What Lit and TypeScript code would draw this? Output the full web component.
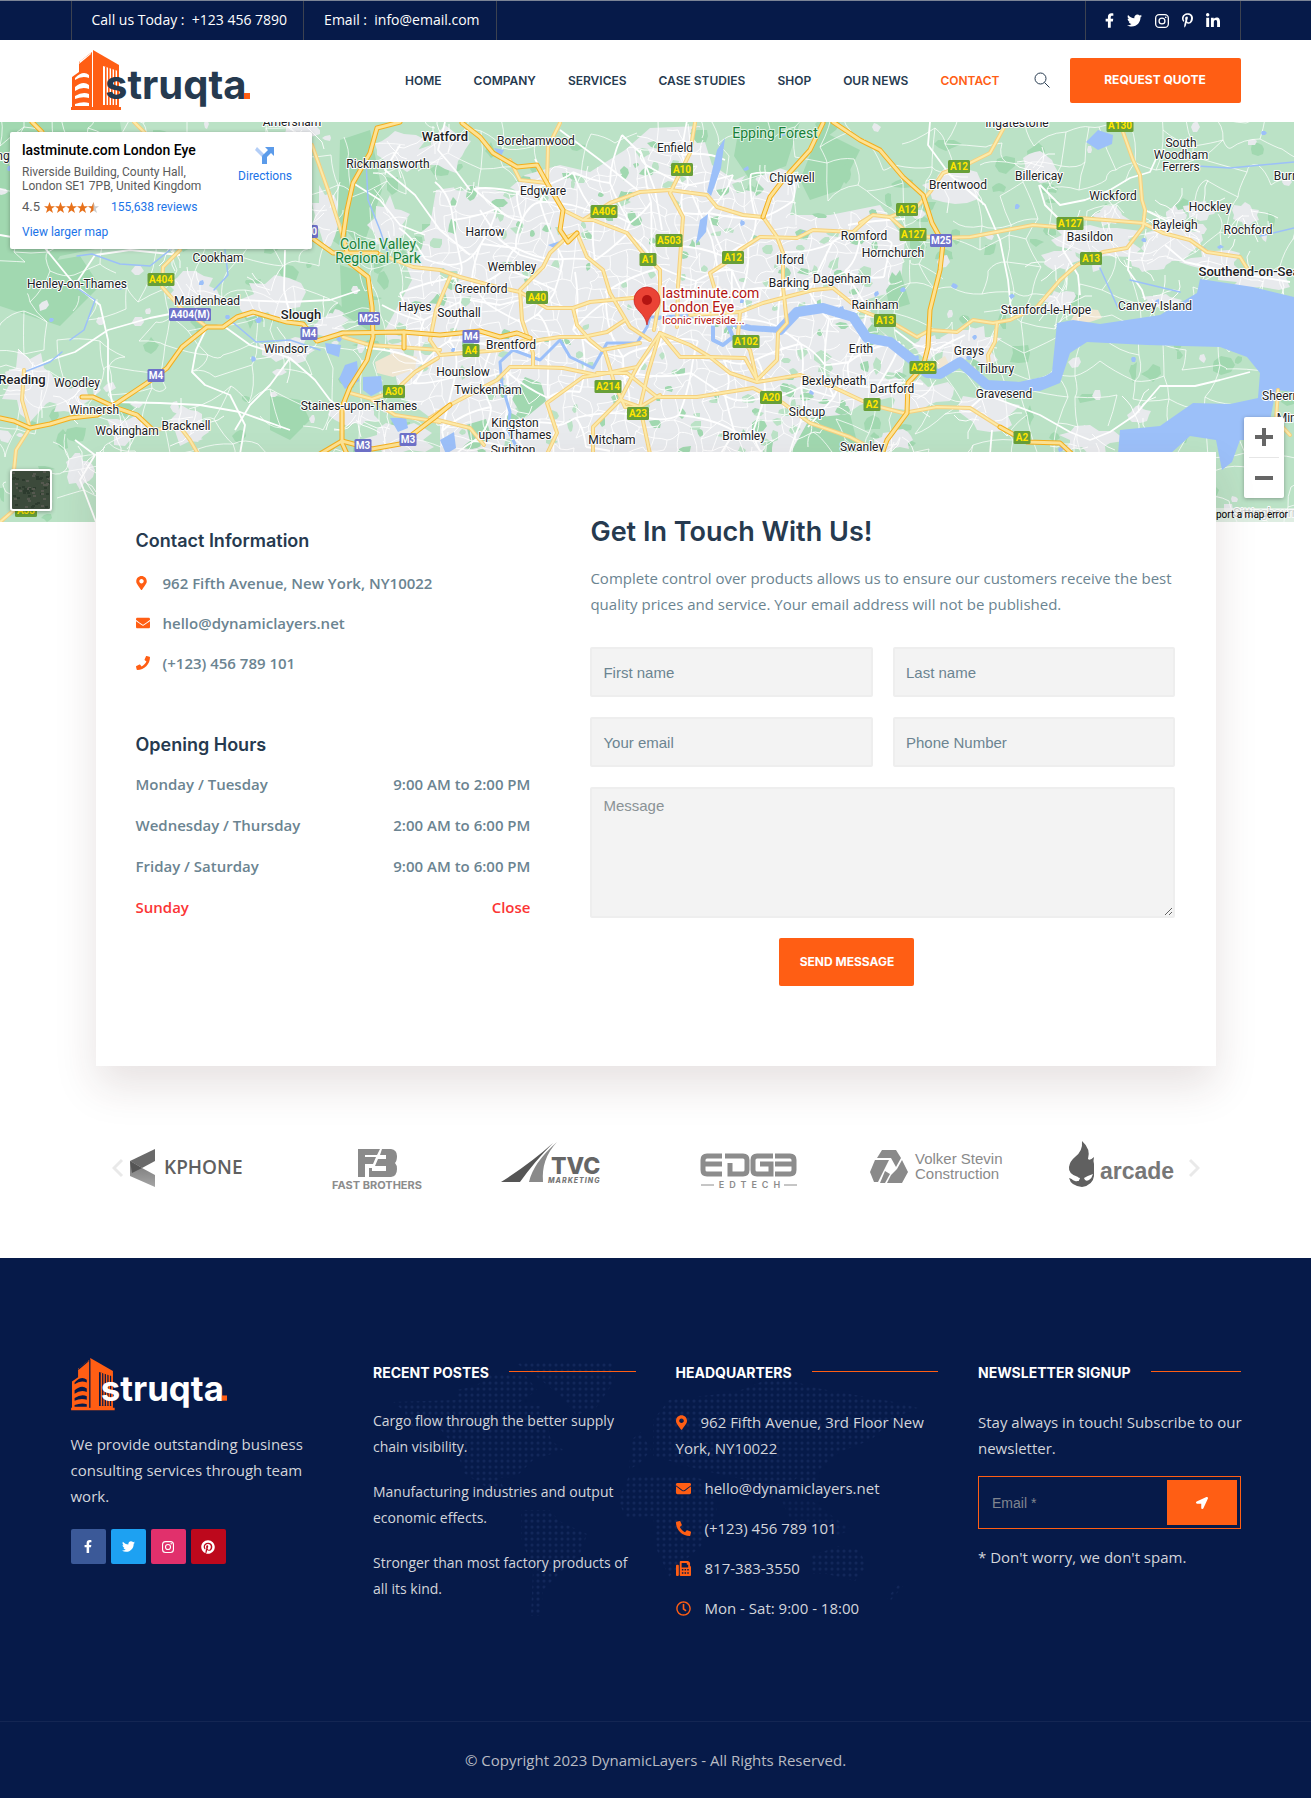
import { LitElement, html, svg, css } from "lit";
import { customElement, property } from "lit/decorators.js";

/* ---------- icon data ---------- */
const ICONS: Record<string, [number, number, string]> = {
  facebook: [320, 512, "M279.14 288l14.22-92.66h-88.91v-60.13c0-25.35 12.42-50.06 52.24-50.06h40.42V6.26S260.43 0 225.36 0c-73.22 0-121.08 44.38-121.08 124.72v70.62H22.89V288h81.39v224h100.17V288z"],
  twitter: [512, 512, "M459.37 151.716c.325 4.548.325 9.097.325 13.645 0 138.72-105.583 298.558-298.558 298.558-59.452 0-114.68-17.219-161.137-47.106 8.447.974 16.568 1.299 25.34 1.299 49.055 0 94.213-16.568 130.274-44.832-46.132-.975-84.792-31.188-98.112-72.772 6.498.974 12.995 1.624 19.818 1.624 9.421 0 18.843-1.3 27.614-3.573-48.081-9.747-84.143-51.98-84.143-102.985v-1.299c13.969 7.797 30.214 12.67 47.431 13.319-28.264-18.843-46.781-51.005-46.781-87.391 0-19.492 5.197-37.36 14.294-52.954 51.655 63.675 129.3 105.258 216.365 109.807-1.624-7.797-2.599-15.918-2.599-24.04 0-57.828 46.782-104.934 104.934-104.934 30.213 0 57.502 12.67 76.67 33.137 23.715-4.548 46.456-13.32 66.599-25.34-7.798 24.366-24.366 44.833-46.132 57.827 21.117-2.273 41.584-8.122 60.426-16.243-14.292 20.791-32.161 39.308-52.628 54.253z"],
  pinterestP: [384, 512, "M204 6.5C101.4 6.5 0 74.9 0 185.6 0 256 39.6 296 63.6 296c9.9 0 15.6-27.6 15.6-35.4 0-9.3-23.7-29.1-23.7-67.8 0-80.4 61.2-137.4 140.4-137.4 68.1 0 118.5 38.7 118.5 109.8 0 53.1-21.3 152.7-90.3 152.7-24.9 0-46.2-18-46.2-43.8 0-37.8 26.4-74.4 26.4-113.4 0-66.2-93.9-54.2-93.9 25.8 0 16.8 2.1 35.4 9.6 50.7-13.8 59.4-42 147.9-42 209.1 0 18.9 2.7 37.5 4.5 56.4 3.4 3.8 1.7 3.4 6.9 1.5 50.4-69 48.6-82.5 71.4-172.8 12.3 23.4 44.1 36 69.3 36 106.2 0 153.9-103.5 153.9-196.8C384 71.3 298.2 6.5 204 6.5z"],
  pinterest: [496, 512, "M496 256c0 137-111 248-248 248-25.6 0-50.2-3.9-73.4-11.1 10.1-16.5 25.2-43.5 30.8-65 3-11.6 15.4-59 15.4-59 8.1 15.4 31.7 28.5 56.8 28.5 74.8 0 128.7-68.8 128.7-154.3 0-81.9-66.9-143.2-152.9-143.2-107 0-163.9 71.8-163.9 150.1 0 36.4 19.4 81.7 50.3 96.1 4.7 2.2 7.2 1.2 8.3-3.3.8-3.4 5-20.3 6.9-28.1.6-2.5.3-4.7-1.7-7.1-10.1-12.5-18.3-35.3-18.3-56.6 0-54.7 41.4-107.6 112-107.6 60.9 0 103.6 41.5 103.6 100.9 0 67.1-33.9 113.6-78 113.6-24.3 0-42.6-20.1-36.7-44.8 7-29.5 20.5-61.3 20.5-82.6 0-19-10.2-34.9-31.4-34.9-24.9 0-44.9 25.7-44.9 60.2 0 22 7.4 36.8 7.4 36.8s-24.5 103.8-29 123.2c-5 21.4-3 51.6-.9 71.2C65.4 450.9 0 361.1 0 256 0 119 111 8 248 8s248 111 248 248z"],
  linkedin: [448, 512, "M100.28 448H7.4V148.9h92.88zM53.79 108.1C24.09 108.1 0 83.5 0 53.8a53.79 53.79 0 0 1 107.58 0c0 29.7-24.1 54.3-53.79 54.3zM447.9 448h-92.68V302.4c0-34.7-.7-79.2-48.29-79.2-48.29 0-55.69 37.7-55.69 76.7V448h-92.78V148.9h89.08v40.8h1.3c12.4-23.5 42.69-48.3 87.88-48.3 94 0 111.28 61.9 111.28 142.3V448z"],
  instagram: [448, 512, "M132 32h184a132 132 0 0 1 132 132v184a132 132 0 0 1-132 132H132A132 132 0 0 1 0 348V164A132 132 0 0 1 132 32zm0 42a90 90 0 0 0-90 90v184a90 90 0 0 0 90 90h184a90 90 0 0 0 90-90V164a90 90 0 0 0-90-90zM224 141a115 115 0 1 1 0 230 115 115 0 0 1 0-230zm0 41a74 74 0 1 0 0 148 74 74 0 0 0 0-148zM344 109a27 27 0 1 1 0 54 27 27 0 0 1 0-54z"],
  marker: [384, 512, "M172.268 501.67C26.97 291.031 0 269.413 0 192 0 85.961 85.961 0 192 0s192 85.961 192 192c0 77.413-26.97 99.031-172.268 309.67-9.535 13.774-29.93 13.773-39.464 0zM192 272c44.183 0 80-35.817 80-80s-35.817-80-80-80-80 35.817-80 80 35.817 80 80 80z"],
  envelope: [512, 512, "M502.3 190.8c3.9-3.1 9.7-.2 9.7 4.7V400c0 26.5-21.5 48-48 48H48c-26.5 0-48-21.5-48-48V195.6c0-5 5.7-7.8 9.7-4.7 22.4 17.4 52.1 39.5 154.1 113.6 21.1 15.4 56.7 47.8 92.2 47.6 35.7.3 72-32.8 92.3-47.6 102-74.1 131.6-96.3 154-113.7zM256 320c23.2.4 56.6-29.2 73.4-41.4 132.7-96.3 142.8-104.7 173.4-128.7 5.8-4.5 9.2-11.5 9.2-18.9v-19c0-26.5-21.5-48-48-48H48c-26.5 0-48 21.5-48 48v19c0 7.4 3.4 14.3 9.2 18.9 30.6 23.9 40.7 32.4 173.4 128.7 16.8 12.2 50.2 41.8 73.4 41.4z"],
  phone: [512, 512, "M493.4 24.6l-104-24c-11.3-2.6-22.9 3.3-27.5 13.9l-48 112c-4.2 9.8-1.4 21.3 6.9 28l60.6 49.6c-36 76.7-98.9 140.5-177.2 177.2l-49.6-60.6c-6.8-8.3-18.2-11.1-28-6.9l-112 48C3.9 366.5-2 378.1.6 389.4l24 104C27.1 504.2 36.7 512 48 512c256.1 0 464-207.5 464-464 0-11.2-7.7-20.9-18.6-23.4z"],
  fax: [512, 512, "M64 128H32a32 32 0 0 0-32 32v320a32 32 0 0 0 32 32h32a32 32 0 0 0 32-32V160a32 32 0 0 0-32-32zM480 162V77a32 32 0 0 0-9-23L426 9a32 32 0 0 0-23-9H160a32 32 0 0 0-32 32v448a32 32 0 0 0 32 32h320a32 32 0 0 0 32-32V224c0-30-12-55-32-62zM192 64h176v48a16 16 0 0 0 16 16h32v96H192zM200 272h52v52h-52zm92 0h52v52h-52zm92 0h52v52h-52zM200 384h52v52h-52zm92 0h52v52h-52zm92 0h52v52h-52z"],
  clock: [512, 512, "M256 8C119 8 8 119 8 256s111 248 248 248 248-111 248-248S393 8 256 8zm0 448c-110.500 0-200-89.500-200-200S145.500 56 256 56s200 89.500 200 200-89.500 200-200 200zM317.800 351.900l-84.900-61.700c-3.100-2.300-4.900-5.900-4.900-9.700V116c0-6.600 5.400-12 12-12h32c6.600 0 12 5.400 12 12v141.700l66.800 48.600c5.400 3.900 6.500 11.400 2.600 16.800L334.600 349c-3.900 5.300-11.400 6.500-16.800 2.900z"],
  arrow: [512, 512, "M444.52 3.52L28.74 195.42c-47.97 22.39-31.98 92.75 19.19 92.75h175.91v175.91c0 51.17 70.36 67.17 92.75 19.19l191.9-415.78c15.99-38.38-25.59-79.97-63.97-63.97z"],
};

function icon(name: string, size: number, flip = false) {
  const [w, h, d] = ICONS[name];
  return html`<svg class="icon" width=${Math.round((size * w) / h)} height=${size} viewBox="0 0 ${w} ${h}" aria-hidden="true">
    <path d=${d} fill="currentColor" fill-rule="evenodd" transform=${flip ? "translate(" + w + ",0) scale(-1,1)" : ""}></path>
  </svg>`;
}

/* ---------- brand mark ---------- */
@customElement("brand-logo")
export class BrandLogo extends LitElement {
  @property({ type: Boolean }) light = false;
  @property({ type: Number }) width = 180;
  static styles = css`
    :host { display: block; }
    svg { display: block; }
    .word { font-family: Inter, "Liberation Sans", sans-serif; font-weight: 700; font-size: 40px; }
  `;
  render() {
    const ink = this.light ? "#fff" : "#263a4f";
    const gap = this.light ? "#061a49" : "#fff";
    return html`<svg width=${this.width} height=${Math.round((this.width * 62) / 180)} viewBox="0 0 180 62" role="img" aria-label="struqta">
      <g fill="#ff5e14">
        <path d="M8 12 21 2v56H1V27l7-5z"></path>
        <path d="M22 0 48 15v43H22z"></path>
        <path d="M0 57h50v3H0z"></path>
      </g>
      <g fill=${gap}>
        <path d="M8 14 20 4v-1L9 11zM21 2h1v55h-1zM32 16l15 5v34H32z"></path>
        <path d="M4 28q8-8 14-3v3q-7-3-14 2zM4 37q8-7 14-2v4q-7-3-14 2zM4 46q8-5 14-2v4q-7-2-14 1zM4 54q8-3 14-1v3H4z"></path>
      </g>
      <g fill="#ff5e14">
        ${[34, 37, 40, 43, 46].map((x) => svg`<rect x=${x} y="17" width="1.600" height="38"></rect>`)}
      </g>
      <text class="word" x="34" y="49" fill=${ink}>struqta</text>
      <rect x="173" y="43" width="6" height="6" fill="#ff5e14"></rect>
    </svg>`;
  }
}

/* ---------- street map ---------- */
type P = [number, number];
const MOTORWAYS = [
  "400,122 377,128 370,153 353,183 347,210 343,237 350,263 368,277 372,307 373,337 367,360 350,387 342,407 342,443 347,454",
  "0,418 14,421 30,428 50,424 70,418 97,415 117,403 147,383 167,368 182,347 207,327 223,327 237,317 253,312 287,322 303,324 317,341 343,333 403,332 440,335 480,331 500,337 517,333 530,338",
  "312,238 333,253 377,253",
  "462,123 480,137 493,153 517,167 537,165 547,183 563,210 560,230 568,242 577,233",
  "823,123 810,150 783,180 770,197 763,217",
  "833,122 860,140 880,150 903,177 923,195 932,223 943,243 940,270 930,310 928,347 923,367 908,383 907,413 887,440 882,454",
  "82,397 93,397 117,408 137,415 153,430",
  "320,454 342,441 372,449 400,444 434,418 450,405",
  "404,332 404,348",
  "1000,427 1027,442 1060,443 1072,454",
  "32,122 42,132",
];
const AROADS = [
  "180,250 163,267 162,287 180,307 207,327",
  "153,430 180,427 190,440 198,454",
  "134,122 145,133",
  "24,370 22,400 30,428 16,450 14,470",
  "0,522 14,510 30,506",
  "377,253 413,267 440,270 460,277 497,287 520,292 547,308 573,308 590,302 643,297",
  "312,145 328,190 343,237",
  "560,123 548,147 547,183 520,180 510,160",
  "583,220 610,203 640,192 670,190 707,195 717,207 743,215 763,217 777,237 783,253 783,287 787,323 778,333 777,360 757,380",
  "563,210 583,220 593,220 627,233 643,253 660,270 660,297 654,330",
  "870,217 853,232 813,230 797,238 760,237 740,250 730,260 710,273 718,300 722,320",
  "860,223 873,215 890,217 917,207 930,192 943,173 970,163 990,153 1007,122",
  "890,217 910,235 940,238 970,237 1033,225 1057,227 1080,218 1143,223 1163,233 1190,240 1207,252 1240,257 1250,273",
  "1119,122 1123,132 1133,160 1140,175 1142,200 1145,210 1143,227 1127,248 1103,252 1077,265 1060,280 1037,307 1010,320 993,323 973,320 957,332 930,330 917,337 893,323 860,310 833,288 813,290 763,303 740,312 690,315",
  "867,403 833,387 800,375 757,382 730,373 710,357 690,345 660,333",
  "867,403 880,407 903,413 937,407 970,408 1000,427",
  "597,373 627,373 657,397 697,397 753,388 783,403 810,423 850,437 882,454",
  "660,333 648,373 640,407 650,454",
  "637,367 620,400 593,427 593,454",
  "660,333 637,367 597,375 583,377 547,403 557,433 547,454",
  "430,418 450,405 497,380 510,367 533,367 563,368 597,375",
  "577,233 567,237 550,253 543,267 520,290 522,320 533,353 533,367",
  "577,233 587,257 603,270 610,293 630,327 650,340",
  "695,123 690,153 670,193 683,217 678,287 677,327",
  "533,341 560,337 583,337 607,332 625,320",
  "573,308 577,325 590,340 602,350 640,343",
  "660,333 680,357 710,357 745,358 757,380",
  "740,312 738,335 750,350 757,380",
  "997,323 995,342 988,355 989,368",
  "430,340 440,355 500,350 530,338",
  "430,340 436,310 450,277",
  "343,337 370,345 440,350",
  "350,393 372,399 395,391 415,372 438,358",
  "372,400 395,415 440,422",
  "430,418 470,428 484,445",
  "620,400 640,407 660,395",
  "605,352 615,385 625,407 640,407",
  "1278,390 1276,420 1290,435",
];
/* minor trunk roads, drawn white */
const WHITE = [
  "0,235 40,242 75,285 100,305 108,340 108,380 112,402", "75,285 95,255 130,250 180,255", "24,372 50,360 75,352 108,330 150,318 180,312",
  "207,327 196,350 192,372 205,385 230,395 245,425 240,454", "225,327 250,345 290,358 315,380 330,400 345,412", "290,358 270,385 250,405 235,430",
  "285,250 284,290 290,315", "240,300 290,302 330,300 360,290", "112,402 160,403 200,405 240,412 290,430", "75,440 95,455 80,480 96,522",
  "930,122 928,145 950,175 985,205 1000,240 1008,280 1012,320", "1039,185 1045,205 1065,225 1063,250 1078,275 1080,295",
  "1040,185 1060,205 1085,200 1110,190 1130,178 1150,172 1160,150", "1130,245 1128,270 1142,290 1145,300", "970,408 985,395 1000,400 1040,415 1070,432 1090,440 1110,432 1135,415 1160,386 1195,386 1220,380 1250,372",
  "903,413 870,405", "1145,210 1165,220 1200,232", "1165,245 1185,262 1230,272 1290,282", "992,430 990,454", "895,330 915,345 935,350 965,335",
  "353,183 380,200 400,225 425,235", "400,145 385,170 415,195 440,230 470,255", "445,122 438,150 455,170 470,190", "480,210 500,240 520,255 545,262",
  "690,190 712,240 718,270", "640,150 655,190 662,230", "783,290 820,282 850,270", "560,130 600,160 640,192", "470,300 500,305 520,300",
];
const LABELS: [string, number, number, string?][] = [
  ["Amersham", 292, 126], ["Rickmansworth", 388, 168], ["Watford", 445, 141, "b"], ["Cookham", 218, 262],
  ["Henley-on-Thames", 77, 288], ["Maidenhead", 207, 305], ["Slough", 301, 319, "b"], ["Windsor", 286, 353],
  ["Hayes", 415, 311], ["Reading", 22, 384, "b"], ["Woodley", 77, 387], ["Winnersh", 94, 414], ["Wokingham", 127, 435],
  ["Bracknell", 186, 430], ["Staines-upon-Thames", 359, 410], ["Colne Valley", 378, 249, "g"], ["Regional Park", 378, 263, "g"],
  ["Borehamwood", 536, 145], ["Enfield", 675, 152], ["Epping Forest", 775, 138, "g"], ["Chigwell", 792, 182], ["Edgware", 543, 195],
  ["Harrow", 485, 236], ["Wembley", 512, 271], ["Greenford", 481, 293], ["Southall", 459, 317], ["Brentford", 511, 349],
  ["Hounslow", 463, 376], ["Twickenham", 488, 394], ["Kingston", 515, 427], ["upon Thames", 515, 439], ["Surbiton", 513, 454],
  ["Mitcham", 612, 444], ["Bromley", 744, 440], ["Sidcup", 807, 416], ["Bexleyheath", 834, 385], ["Ilford", 790, 264],
  ["Barking", 789, 287], ["Dagenham", 842, 283], ["Romford", 864, 240], ["Hornchurch", 893, 257], ["Rainham", 875, 309],
  ["Erith", 861, 353], ["Ingatestone", 1017, 127], ["Billericay", 1039, 180], ["Brentwood", 958, 189], ["South", 1181, 147],
  ["Woodham", 1181, 159], ["Ferrers", 1181, 171], ["Wickford", 1113, 200], ["Hockley", 1210, 211], ["Rayleigh", 1175, 229],
  ["Rochford", 1248, 234], ["Basildon", 1090, 241], ["Canvey Island", 1155, 310], ["Stanford-le-Hope", 1046, 314],
  ["Grays", 969, 355], ["Tilbury", 996, 373], ["Dartford", 892, 393], ["Gravesend", 1004, 398], ["Swanley", 862, 451],
  ["ng", 3, 160], ["Burnham", 1298, 180], ["Southend-on-Sea", 1249, 276, "b"], ["Sheerness", 1290, 400], ["Minster", 1297, 422],
  ["Sittingbourne", 1269, 517, "f"],
];
const SHIELDS: [string, number, number][] = [
  ["A404", 161, 279], ["A404(M)", 190, 314], ["M4", 156, 375], ["M4", 309, 333], ["M25", 369, 318], ["A30", 394, 391],
  ["M3", 363, 445], ["M3", 408, 439], ["M40", 307, 231], ["A33", 26, 510], ["A10", 682, 169], ["A406", 604, 211],
  ["A503", 669, 240], ["A1", 648, 259], ["A12", 733, 257], ["A40", 537, 297], ["M4", 471, 336], ["A4", 471, 350],
  ["A214", 608, 386], ["A23", 638, 413], ["A102", 746, 341], ["A20", 771, 397], ["A12", 959, 166], ["A12", 907, 209],
  ["A127", 913, 234], ["M25", 941, 240], ["A130", 1120, 125], ["A127", 1070, 223], ["A13", 1091, 258], ["A13", 885, 320],
  ["A282", 923, 367], ["A2", 872, 404], ["A2", 1022, 437],
];
const LONDON: P[] = [
  [412, 280], [400, 250], [430, 225], [436, 190], [470, 185], [505, 192], [525, 175], [560, 165], [590, 172], [625, 150], [650, 128],
  [700, 126], [712, 165], [735, 180], [770, 165], [800, 175], [790, 215], [830, 215], [880, 205], [905, 240], [900, 290],
  [865, 300], [880, 330], [905, 350], [900, 395], [860, 405], [830, 425], [790, 454], [440, 454], [440, 425], [400, 395],
  [385, 330],
];
/* x, y, half-width, half-height of built-up patches outside the capital */
const TOWNS: number[][] = [
  [30, 385, 28, 34], [70, 400, 24, 18], [125, 430, 24, 14], [190, 425, 22, 20], [195, 290, 28, 18], [275, 300, 34, 22], [285, 350, 26, 14],
  [330, 325, 18, 12], [395, 150, 30, 22], [445, 150, 26, 22], [325, 215, 14, 30], [390, 225, 20, 26], [400, 440, 40, 20], [355, 415, 24, 14],
  [300, 130, 22, 10], [955, 185, 30, 18], [1040, 165, 18, 18], [1110, 215, 20, 12], [1090, 240, 52, 22], [1060, 260, 20, 12],
  [1170, 240, 34, 22], [1215, 262, 34, 12], [1262, 280, 42, 10], [1150, 262, 24, 12], [1160, 300, 22, 8], [1060, 300, 20, 12],
  [970, 345, 36, 20], [930, 345, 16, 14], [920, 395, 36, 16], [990, 412, 34, 20], [895, 440, 20, 12], [1090, 440, 36, 14],
  [1245, 215, 14, 12], [1200, 210, 16, 10], [1175, 215, 12, 10], [80, 470, 14, 18], [1140, 415, 12, 10], [170, 245, 10, 6],
];

function seeded(seed: number) {
  let s = seed;
  return () => {
    s = (s * 16807) % 2147483647;
    return s / 2147483647;
  };
}
function inside(x: number, y: number, poly: P[]) {
  let hit = false;
  for (let i = 0, j = poly.length - 1; i < poly.length; j = i++) {
    const [xi, yi] = poly[i];
    const [xj, yj] = poly[j];
    if (yi > y !== yj > y && x < ((xj - xi) * (y - yi)) / (yj - yi) + xi) hit = !hit;
  }
  return hit;
}
function blob(r: () => number, x: number, y: number, rx: number, ry: number, n: number) {
  const pts: string[] = [];
  for (let i = 0; i < n; i++) {
    const a = (i / n) * Math.PI * 2;
    const k = 0.55 + r() * 0.6;
    pts.push(Math.round(x + Math.cos(a) * rx * k) + "," + Math.round(y + Math.sin(a) * ry * k));
  }
  return "M" + pts.join("L") + "Z";
}
function lane(r: () => number, x: number, y: number, steps: number, len: number) {
  let a = r() * Math.PI * 2;
  let d = "M" + Math.round(x) + " " + Math.round(y);
  for (let i = 0; i < steps; i++) {
    a += (r() - 0.5) * 1.1;
    x += Math.cos(a) * len;
    y += Math.sin(a) * len;
    d += "L" + x.toFixed(0) + " " + y.toFixed(0);
  }
  return d;
}
/* net of jittered cells, so that lanes join at junctions */
function net(r: () => number, x0: number, y0: number, x1: number, y1: number, step: number, keep: number, ok: (x: number, y: number) => boolean) {
  const cols = Math.ceil((x1 - x0) / step) + 1;
  const rows = Math.ceil((y1 - y0) / step) + 1;
  const pt: P[][] = [];
  for (let j = 0; j < rows; j++) {
    pt.push([]);
    for (let i = 0; i < cols; i++) pt[j].push([x0 + (i + (r() - 0.5) * 0.9) * step, y0 + (j + (r() - 0.5) * 0.9) * step]);
  }
  let d = "";
  const link = (a: P, b: P) => {
    if (r() > keep || !ok((a[0] + b[0]) / 2, (a[1] + b[1]) / 2)) return;
    const mx = (a[0] + b[0]) / 2 + (r() - 0.5) * step * 0.5;
    const my = (a[1] + b[1]) / 2 + (r() - 0.5) * step * 0.5;
    d += "M" + a[0].toFixed(0) + " " + a[1].toFixed(0) + "Q" + mx.toFixed(0) + " " + my.toFixed(0) + " " + b[0].toFixed(0) + " " + b[1].toFixed(0);
  };
  for (let j = 0; j < rows; j++)
    for (let i = 0; i < cols; i++) {
      if (i + 1 < cols) link(pt[j][i], pt[j][i + 1]);
      if (j + 1 < rows) link(pt[j][i], pt[j + 1][i]);
    }
  return d;
}
function terrain() {
  const r = seeded(4711);
  let woods = "", parks = "", greens = "", towns = "", streets = "", ponds = "";
  for (let i = 0; i < 190; i++) {
    const x = r() * 1294, y = 122 + r() * 400;
    if (!inside(x, y, LONDON)) woods += blob(r, x, y, 3 + r() * 11, 3 + r() * 9, 8);
  }
  for (const t of TOWNS) towns += blob(r, t[0], t[1], t[2], t[3], 16);
  for (let i = 0; i < 110; i++) towns += blob(r, r() * 1294, 122 + r() * 400, 3 + r() * 5, 3 + r() * 5, 6);
  for (let i = 0; i < 360; i++) {
    const x = 390 + r() * 520, y = 122 + r() * 330;
    const far = Math.hypot((x - 650) / 250, (y - 310) / 170);
    if (inside(x, y, LONDON) && far > r() * 0.9) {
      const k = blob(r, x, y, 3 + r() * 8 * far, 3 + r() * 6 * far, 7);
      if (r() > 0.45) greens += k;
      else parks += k;
    }
  }
  const lanes = net(r, -10, 112, 1304, 532, 26, 0.62, (x, y) => !inside(x, y, LONDON));
  const urban = net(r, 380, 112, 915, 460, 13, 0.72, (x, y) => inside(x, y, LONDON));
  const main = net(r, 380, 112, 915, 460, 34, 0.8, (x, y) => inside(x, y, LONDON));
  for (const t of TOWNS) for (let i = 0; i < 5; i++) streets += lane(r, t[0] + (r() - 0.5) * t[2], t[1] + (r() - 0.5) * t[3], 4, 7);
  for (let i = 0; i < 45; i++) ponds += blob(r, r() * 1294, 122 + r() * 400, 3, 3, 6);
  return { woods, parks, greens, towns, lanes, streets: streets + urban, main, ponds };
}

@customElement("street-map")
export class StreetMap extends LitElement {
  static styles = css`
    :host { display: block; position: relative; height: 400px; overflow: hidden; font-family: Roboto, sans-serif; }
    .canvas { display: block; width: 100%; height: 100%; }
    text { font-family: Roboto, sans-serif; }
    .label { font-size: 12px; fill: #202124; text-anchor: middle; paint-order: stroke; stroke: #fff; stroke-width: 2px; stroke-linejoin: round; }
    .b { font-size: 13px; font-weight: 500; }
    .g { font-size: 14px; fill: #188038; stroke: #dff3e5; }
    .f { fill: #8b9a90; }
    .shield { font-size: 10px; font-weight: 700; text-anchor: middle; }
    .poi { font-size: 14px; fill: #b31412; paint-order: stroke; stroke: #fff; stroke-width: 3px; }
    .sub { font-size: 11px; }
    .info { position: absolute; left: 10px; top: 10px; width: 302px; height: 117px; box-sizing: border-box; padding: 8px 12px; background: #fff; border-radius: 2px; box-shadow: 0 1px 4px rgba(0, 0, 0, 0.3); display: flex; justify-content: space-between; font-size: 12px; line-height: 14px; color: #5b5b5b; }
    .name { margin: 0; font-size: 14px; line-height: 20px; font-weight: 500; color: #000; }
    .addr { margin: 5px 0 4px; }
    .rate { display: flex; align-items: center; gap: 4px; height: 20px; }
    .score { font-size: 13px; }
    .reviews { margin-left: 8px; }
    .larger { display: block; margin-top: 7px; line-height: 16px; }
    a { color: #1a73e8; text-decoration: none; }
    .dir { display: flex; flex-direction: column; align-items: center; gap: 4px; margin: 5px 8px 0 0; }
    .zoom { position: absolute; right: 10px; bottom: 24px; width: 40px; background: #fff; border-radius: 2px; box-shadow: 0 1px 4px rgba(0, 0, 0, 0.3); display: flex; flex-direction: column; }
    .zoom button { height: 40px; border: 0; background: none; padding: 0; display: grid; place-items: center; }
    .sep { height: 1px; margin: 0 5px; background: #e6e6e6; }
    .sat { position: absolute; left: 10px; bottom: 11px; width: 42px; height: 42px; padding: 0; border: 2px solid #fff; border-radius: 3px; overflow: hidden; box-shadow: 0 1px 4px rgba(0, 0, 0, 0.3); background: #3c4a3b; }
    .sat svg { display: block; }
    .err { position: absolute; right: 0; bottom: 0; height: 14px; line-height: 14px; padding: 0 6px; font-size: 10px; color: #000; background: rgba(245, 245, 245, 0.6); }
  `;
  private t = terrain();
  private road(list: string[], w: number, edge: string, fill: string) {
    return svg`
      <g fill="none" stroke=${edge} stroke-width=${w} stroke-linejoin="round" stroke-linecap="round">${list.map((p) => svg`<polyline points=${p}></polyline>`)}</g>
      <g fill="none" stroke=${fill} stroke-width=${w - 2} stroke-linejoin="round" stroke-linecap="round">${list.map((p) => svg`<polyline points=${p}></polyline>`)}</g>`;
  }
  private star(x: number, fill: string) {
    return svg`<path transform="translate(${x},0)" fill=${fill} d="M5.500 0 7 4.200h4L7.700 6.700 9 11 5.500 8.400 2 11l1.300-4.300L0 4.200h4z"></path>`;
  }
  render() {
    const t = this.t;
    const dark = seeded(99);
    return html`
      <svg class="canvas" viewBox="0 122 1294 400" preserveAspectRatio="xMidYMid slice" role="img" aria-label="Map of London">
        <rect x="0" y="122" width="1294" height="400" fill="#bbe2c6"></rect>
        <path d="M0 122h120l10 60-30 66-40 8-20 30-40-14zM0 270l80-14 20 30-40 40-60-20zM340 140l30-10 12 60-20 60-24-30zM340 265l26 8 6 60-30-20zM820 130l40 20-20 40-30 10-10-20zM270 395l30 5 10 20-20 20-20-10z" fill="#a1d8b0"></path>
        <path d=${t.woods} fill="#a1d8b0"></path>
        <path d=${t.towns} fill="#e8eaed"></path>
        <path d=${"M" + LONDON.map((p) => p.join(",")).join("L") + "Z"} fill="#e8eaed"></path>
        <path d=${t.greens} fill="#bbe2c6"></path>
        <path d=${t.parks} fill="#a1d8b0"></path>
        <path d="M525 377l16 6 5 18-22 18-12-20zM466 425l20-6 6 20-20 10zM740 122l60 0-14 44-36 14-16-24zM790 454l20-36 40-4 10 40zM900 270l-14 20 4 20 20-6z" fill="#a1d8b0"></path>
        <path d="M375 362l20-10 22 5-2 12-22 8-16-4zM1070 322l8-14 20 2 4 8-24 8zM935 362l10-6 6 12-10 8zM965 370l10-4 6 16z" fill="#f0e6d2"></path>
        <path d=${t.lanes} fill="none" stroke="#fff" stroke-width="1" opacity="0.75"></path>
        <path d=${t.streets} fill="none" stroke="#fff" stroke-width="1" opacity="0.900"></path>
        <path d=${t.main} fill="none" stroke="#fff" stroke-width="1.800" stroke-linejoin="round"></path>
        <g fill="none" stroke="#fff" stroke-width="1.800" stroke-linejoin="round">${WHITE.map((p) => svg`<polyline points=${p}></polyline>`)}</g>
        <g fill="#9cc0f9">
          <path d=${t.ponds}></path>
          <path d="M1020 391 1052 372 1057 323 1073 320 1100 324 1160 315 1197 293 1200 279 1253 287 1294 297V392L1276 390 1272 410 1266 440 1240 440 1232 462 1222 470 1216 440 1190 436 1170 454H1118L1120 430 1160 426 1193 403 1230 404 1258 398 1260 373 1247 357 1220 347 1147 345 1087 342 1070 353 1060 383 1040 391z"></path>
          <path d="M1086 142 1098 130 1113 135 1112 144 1098 150zM717 150l8-12-4 30-10 28-4-4zM700 220l8-6-2 18-10 12zM494 148l10 2-4 8zM548 245l12-4-4 8zM325 343l16 2-2 12-12-4zM345 365l12-4 2 20-14 8-6-10zM363 377l18-1 2 14-12 6-8-6zM390 418l16 0 2 10-10 4zM440 440l14-8 2 16-10 6z"></path>
        </g>
        <g fill="none" stroke="#9cc0f9" stroke-linejoin="round" stroke-linecap="round">
          <path stroke-width="3" d="M520 454 508 430 510 412 502 385 500 362 513 350 540 360 560 340 570 357 593 368 607 343 637 343 647 327 650 317 670 317"></path>
          <path stroke-width="4" d="M670 317 690 316 713 320 713 340 723 345 733 337 728 325 735 322"></path>
          <path stroke-width="6" d="M730 323 750 328 780 330"></path>
          <path stroke-width="10" d="M780 330 797 312 823 308 853 317 867 338 890 342 910 358 927 373 940 374 960 362 974 374 987 385 1020 387 1052 380"></path>
          <path stroke-width="1.500" d="M77 288 95 300 84 330 70 340M77 256 92 254 120 264 150 266 170 250M225 250 228 275 214 290M230 320 256 342 290 340 320 350M24 372 50 362 62 352M366 160 368 200 380 230 390 260M1100 268 1110 290 1118 308M1180 165 1230 168 1294 162M1260 236 1294 228M1130 280 1180 292"></path>
        </g>
        ${this.road(AROADS, 4, "#f5d07f", "#fdeaa8")}
        ${this.road(MOTORWAYS, 5, "#f3ae1c", "#fde293")}
        ${LABELS.map(([s, x, y, k]) => svg`<text class="label ${k ?? ""}" x=${x} y=${y}>${s}</text>`)}
        ${SHIELDS.map(([s, x, y]) => {
          const w = s.length * 5 + 7;
          const m = s[0] === "M" || s.endsWith(")");
          return svg`<rect x=${x - w / 2} y=${y - 6} width=${w} height="13" rx="1.500" fill=${m ? "#6e72c9" : "#689f38"}></rect>
            <text class="shield" x=${x} y=${y + 4} fill=${m ? "#fff" : "#ffe500"}>${s}</text>`;
        })}
        <path d="M647 325C645 312 634 311 634 300a13 13 0 0 1 26 0C660 311 649 312 647 325z" fill="#ea4335" stroke="#c5221f" stroke-width="0.700"></path>
        <circle cx="647" cy="300" r="5" fill="#b31412"></circle>
        <text class="poi" x="662" y="298">lastminute.com</text>
        <text class="poi" x="662" y="312">London Eye</text>
        <text class="poi sub" x="662" y="324">Iconic riverside...</text>
      </svg>
      <div class="info">
        <div>
          <h2 class="name">lastminute.com London Eye</h2>
          <p class="addr">Riverside Building, County Hall,<br />London SE1 7PB, United Kingdom</p>
          <div class="rate">
            <span class="score">4.5</span>
            <svg width="55" height="11" viewBox="0 0 55 11" aria-hidden="true">
              ${[0, 11, 22, 33].map((x) => this.star(x, "#e7711b"))}
              ${this.star(44, "#ccc")}<path d="M49.500 0v8.400L46 11l1.300-4.300L44 4.200h4z" fill="#e7711b"></path>
            </svg>
            <a class="reviews" href="#reviews">155,638 reviews</a>
          </div>
          <a class="larger" href="#map">View larger map</a>
        </div>
        <a class="dir" href="#directions">
          <svg width="20" height="20" viewBox="0 0 20 20" aria-hidden="true">
            <path d="M2 2 9 9v5L0 5z" fill="#b3cef7"></path>
            <path d="M7 19v-7q0-2 2-3l4-4-3-3h9v9l-3-3-4 4v7z" fill="#5b9bea"></path>
          </svg>
          Directions
        </a>
      </div>
      <button class="sat" aria-label="Show satellite imagery">
        <svg width="38" height="38" viewBox="0 0 38 38">
          ${Array.from({ length: 60 }, () => svg`<rect x=${Math.round(dark() * 36)} y=${Math.round(dark() * 36)} width="3" height="2" fill=${dark() > 0.5 ? "#55584f" : "#2d3b2e"}></rect>`)}
        </svg>
      </button>
      <div class="zoom">
        <button aria-label="Zoom in"><svg width="18" height="18"><path d="M7 0h4v7h7v4h-7v7H7v-7H0V7h7z" fill="#666"></path></svg></button>
        <div class="sep"></div>
        <button aria-label="Zoom out"><svg width="18" height="18"><path d="M0 7h18v4H0z" fill="#666"></path></svg></button>
      </div>
      <a class="err" href="#report">Report a map error</a>
    `;
  }
}

/* ---------- partner logos ---------- */
const PARTNERS = [
  svg`<defs><linearGradient id="k" x1="0" y1="0" x2="0" y2="1"><stop offset="0" stop-color="#777"></stop><stop offset="1" stop-color="#a5a5a5"></stop></linearGradient></defs>
    <path d="M26 28 51 16v12L38 35z" fill="#6a6a6a"></path><path d="M26 28v15l25 11V42L38 35z" fill="url(#k)"></path><path d="M26 28 38 35l-10 5z" fill="#555"></path>
    <text x="60" y="41" font-family="Open Sans, sans-serif" font-weight="600" font-size="19" fill="#606060">KPHONE</text>`,
  svg`<path d="M68 16h22l-3 6H75v2h11l-3 7h-8v13h-7zM92 16h9q6 1 6 7 0 5-2 7 2 2 2 6 0 7-6 8H79v-9h3v3h14v-5H85l3-7h8v-4h-6z" fill="#8a8a8a"></path>
    <text x="87" y="56" text-anchor="middle" font-family="Inter, sans-serif" font-weight="700" font-size="11" fill="#8c8c8c">FAST BROTHERS</text>`,
  svg`<path d="M24 49Q54 30 76 10 58 28 43 49z" fill="#555"></path><path d="M80 9Q56 30 52 49h14Q64 26 80 9z" fill="#8a8a8a"></path>
    <text x="74" y="41" font-family="Inter, sans-serif" font-weight="800" font-size="23" fill="#666">TVC</text>
    <text x="71" y="50" font-family="Inter, sans-serif" font-style="italic" font-weight="800" font-size="7" letter-spacing="1" fill="#777">MARKETING</text>`,
  svg`<g fill="none" stroke="#8c8c8c" stroke-width="5"><path d="M58 23H43q-4 0-4 4v10q0 4 4 4h15M41 31h17"></path><path d="M61 23h18q4 0 4 4v10q0 4-4 4H66V30"></path><path d="M109 23H93q-4 0-4 4v10q0 4 4 4h14V31H96"></path><path d="M111 23h15q4 0 4 4v10q0 4-4 4h-15M111 31h17"></path></g>
    <path d="M37 52h13M120 52h13" stroke="#8c8c8c"></path>
    <text x="88" y="55" text-anchor="middle" font-family="Inter, sans-serif" font-weight="600" font-size="9" letter-spacing="5" fill="#8c8c8c">EDTECH</text>`,
  svg`<g fill="#8a8a8a"><path d="M32 17h14l5 8-5 9-5-9H27z"></path><path d="M25 27h14l-8 16-3 6h-4l-4-10z"></path><path d="M52 27l6 12-6 11H37l4-8 6-6z"></path><path d="M30 50l5-12 5 3-5 9z"></path></g>
    <text x="65" y="31" font-family="Liberation Sans, sans-serif" font-size="15" fill="#8a8a8a">Volker Stevin</text>
    <text x="65" y="46" font-family="Liberation Sans, sans-serif" font-size="15" fill="#8a8a8a">Construction</text>`,
  svg`<path d="M45 8q9 8 6 18 2 2 6-2-1 4 0 7 0 4 0 12-1 9-12 11-11-1-13-9 5 2 10 3l-1-4q-10-3-9-10 1-6 6-10 8-6 7-16z" fill="#606060"></path>
    <path d="M33 42q6 2 10 3-1 4-5 3-4-1-5-6zM56 41q-6 2-9 4 1 4 5 2 3-2 4-6z" fill="#fff"></path>
    <text x="63" y="46" font-family="Liberation Sans, sans-serif" font-weight="700" font-size="23" fill="#777">arcade</text>`,
];

const NAV = ["HOME", "COMPANY", "SERVICES", "CASE STUDIES", "SHOP", "OUR NEWS", "CONTACT"];
const HOURS = [
  ["Monday / Tuesday", "9:00 AM to 2:00 PM"],
  ["Wednesday / Thursday", "2:00 AM to 6:00 PM"],
  ["Friday / Saturday", "9:00 AM to 6:00 PM"],
  ["Sunday", "Close"],
];
const POSTS = [
  "Cargo flow through the better supply chain visibility.",
  "Manufacturing industries and output economic effects.",
  "Stronger than most factory products of all its kind.",
];

@customElement("app-root")
export class AppRoot extends LitElement {
  static styles = css`
    :host { display: block; background: #fff; font-family: "Open Sans", sans-serif; font-size: 15px; line-height: 26px; color: #6b8491; }
    h2, h3, p, ul { margin: 0; padding: 0; }
    ul { list-style: none; }
    a { color: inherit; text-decoration: none; }
    .icon { display: block; flex: none; }
    .wrap { max-width: 1170px; margin: 0 auto; }

    .top { background: #061a49; border-top: 1px solid #7b8496; color: #fff; font-size: 14px; }
    .top .wrap { box-sizing: border-box; display: flex; height: 39px; align-items: stretch; border: solid #3c4250; border-width: 0 1px; }
    .cell { display: flex; align-items: center; padding: 0 16px 2px 20px; border-right: 1px solid #3c4250; white-space: pre; }
    .follow { margin-left: auto; display: flex; align-items: center; gap: 13px; padding: 0 20px 0 19px; border-left: 1px solid #3c4250; }

    .head .wrap { display: flex; align-items: center; height: 82px; }
    .nav { display: flex; gap: 32px; margin-left: auto; font: 600 12px/20px Inter, sans-serif; color: #263a4f; }
    .nav .on { color: #ff5e14; }
    .search { border: 0; background: none; padding: 0; margin: 0 20px 0 34px; display: block; }
    .btn { border: 0; border-radius: 2px; background: #ff5e14; color: #fff; font: 700 12px/20px Inter, sans-serif; display: block; text-align: center; }
    .quote { width: 171px; padding: 12px 0 13px; margin-bottom: 2px; }

    .map { margin-right: 17px; }
    .card { position: relative; max-width: 1040px; margin: -70px auto 0; padding: 62px 40px 80px; background: #fff; box-shadow: 0 20px 40px rgba(70, 30, 30, 0.13); display: grid; grid-template-columns: 27fr 40fr; gap: 60px; }
    .card h2 { font: 600 27px/36px Inter, sans-serif; color: #263a4f; }
    .card h3 { font: 600 18px/24px Inter, sans-serif; color: #263a4f; }
    .left { padding-top: 15px; font-weight: 600; }
    .info { margin: 10px 0 50px; }
    .info li { display: grid; grid-template-columns: 27px 1fr; align-items: center; height: 40px; }
    .info .icon, .hq .icon { color: #ff5e14; }
    .hours { width: 100%; border-collapse: collapse; margin-top: 6px; }
    .hours td { height: 41px; padding: 0; }
    .hours td + td { text-align: right; }
    .hours .closed { color: #fb3535; }
    .lead { margin-top: 15px; }
    .form { display: grid; grid-template-columns: 1fr 1fr; gap: 20px; margin-top: 30px; }
    .field { box-sizing: border-box; width: 100%; height: 50px; padding: 0 11px; border: 2px solid #eee; border-radius: 2px; background: #f3f3f3; font: 15px "Liberation Sans", Arial, sans-serif; color: #263a4f; display: block; }
    .field::placeholder { color: #6b8491; opacity: 1; }
    .area { grid-column: 1 / -1; height: 131px; padding-top: 8px; }
    .area::placeholder { color: #8a9296; }
    .act { grid-column: 1 / -1; display: flex; justify-content: center; padding-right: 72px; }
    .send { width: 135px; padding: 14px 0; }

    .brands { position: relative; max-width: 1120px; margin: 0 auto; padding: 67px 0 55px; display: grid; grid-template-columns: repeat(6, 1fr); justify-items: center; }
    .brands .logo { display: block; width: 170px; height: 70px; }
    .arrow { position: absolute; top: 92px; border: 0; background: none; padding: 0; line-height: 0; }
    .prev { left: 16px; }
    .next { right: 16px; }

    .foot { position: relative; background: #061a49; color: #d3d5db; }
    .world { position: absolute; left: 50%; top: 100px; margin-left: -265px; }
    .cols { position: relative; padding: 100px 0; display: grid; grid-template-columns: repeat(4, minmax(0, 1fr)); gap: 40px; }
    .foot h3 { display: flex; align-items: center; gap: 20px; margin: 3px 0 23px; font: 700 14px/24px Inter, sans-serif; color: #fff; white-space: nowrap; }
    .foot h3::after { content: ""; flex: 1; height: 1px; margin-bottom: 3px; background: #ff5e14; }
    .about { margin: 19px 0 20px; }
    .social { display: flex; gap: 5px; }
    .social a { width: 35px; height: 35px; border-radius: 2px; display: grid; place-items: center; color: #fff; }
    .fb { background: #3b5998; }
    .tw { background: #1da1f2; }
    .ig { background: #e1306c; }
    .pt { background: #bd081c; }
    .posts { display: grid; gap: 19px; font-size: 14px; }
    .hq { display: grid; gap: 14px; margin-top: 24px; }
    .hq .row { display: flex; align-items: center; gap: 14px; }
    .hq .inline { display: inline-block; vertical-align: -2px; margin-right: 14px; }
    .news { margin: 24px -20px 0 0; }
    .sub { display: flex; margin: 15px 0; height: 45px; padding: 3px; border: 1px solid #ff5e14; }
    .sub input { flex: 1; min-width: 0; border: 0; background: none; padding: 0 10px; font: 14px "Liberation Sans", Arial, sans-serif; color: #fff; }
    .sub input::placeholder { color: #80858f; opacity: 1; }
    .go { width: 70px; border: 0; padding: 0; background: #ff5e14; color: #fff; display: grid; place-items: center; }
    .copy { border-top: 1px solid #142653; padding: 25px 0; text-align: center; color: #b9bcc4; }
  `;

  private world() {
    return html`<svg class="world" width="530" height="262" viewBox="390 1358 530 262" aria-hidden="true">
      <defs><pattern id="dots" width="6" height="6" patternUnits="userSpaceOnUse"><circle cx="3" cy="3" r="1.500" fill="#12275a"></circle></pattern></defs>
      <path fill="url(#dots)" d="M392 1402 456 1400 456 1390 475 1386 490 1373 525 1376 536 1390 515 1405 540 1406 550 1440 562 1450 532 1460 515 1477 498 1478 510 1503 490 1490 463 1473 456 1450 440 1430 406 1430 404 1412zM512 1361 H612L614 1380 595 1408 575 1415 562 1398 540 1380zM520 1510 548 1510 560 1522 586 1534 580 1552 560 1572 542 1590 540 1616 530 1616 532 1570 520 1538zM652 1420 668 1400 735 1392 775 1376 815 1388 893 1402 917 1408 893 1418 870 1440 838 1452 818 1470 812 1490 796 1478 770 1498 745 1480 700 1470 652 1456zM630 1440 640 1432 650 1450 640 1462 628 1470zM628 1476 692 1476 712 1484 716 1512 700 1546 680 1564 668 1577 656 1550 652 1516 625 1518 617 1500zM810 1556 838 1546 858 1550 866 1566 854 1581 826 1574 810 1574zM886 1598 900 1582 902 1586 890 1600z"></path>
      <path fill="url(#dots)" d="M780 1500 810 1500 850 1530 830 1538 790 1520z" opacity="0.700"></path>
    </svg>`;
  }

  render() {
    return html`
      <div class="top"><div class="wrap">
        <a class="cell" href="tel:+1234567890">Call us Today :  +123 456 7890</a>
        <a class="cell" href="mailto:info@email.com">Email :  info@email.com</a>
        <div class="follow">
          <a href="#facebook" aria-label="Facebook">${icon("facebook", 15)}</a>
          <a href="#twitter" aria-label="Twitter">${icon("twitter", 15)}</a>
          <a href="#instagram" aria-label="Instagram">${icon("instagram", 16)}</a>
          <a href="#pinterest" aria-label="Pinterest">${icon("pinterestP", 15)}</a>
          <a href="#linkedin" aria-label="LinkedIn">${icon("linkedin", 16)}</a>
        </div>
      </div></div>

      <header class="head"><div class="wrap">
        <a href="#home"><brand-logo></brand-logo></a>
        <nav class="nav">${NAV.map((n) => html`<a class=${n === "CONTACT" ? "on" : ""} href="#${n.toLowerCase().replace(" ", "-")}">${n}</a>`)}</nav>
        <button class="search" aria-label="Search"><svg width="16" height="16" viewBox="0 0 16 16"><circle cx="6.500" cy="6.500" r="5.500" fill="none" stroke="#263a4f"></circle><path d="M10.500 10.500 15.500 15.500" stroke="#263a4f"></path></svg></button>
        <a class="btn quote" href="#quote">REQUEST QUOTE</a>
      </div></header>

      <street-map class="map"></street-map>

      <section class="card">
        <div class="left">
          <h3>Contact Information</h3>
          <ul class="info">
            <li>${icon("marker", 14)}962 Fifth Avenue, New York, NY10022</li>
            <li>${icon("envelope", 14)}<a href="mailto:hello@dynamiclayers.net">hello@dynamiclayers.net</a></li>
            <li>${icon("phone", 14)}<a href="tel:+123456789101">(+123) 456 789 101</a></li>
          </ul>
          <h3>Opening Hours</h3>
          <table class="hours"><tbody>
            ${HOURS.map(([d, h]) => html`<tr class=${h === "Close" ? "closed" : ""}><td>${d}</td><td>${h}</td></tr>`)}
          </tbody></table>
        </div>
        <div>
          <h2>Get In Touch With Us!</h2>
          <p class="lead">Complete control over products allows us to ensure our customers receive the best quality prices and service. Your email address will not be published.</p>
          <form class="form">
            <input class="field" type="text" aria-label="First name" placeholder="First name" />
            <input class="field" type="text" aria-label="Last name" placeholder="Last name" />
            <input class="field" type="email" aria-label="Your email" placeholder="Your email" />
            <input class="field" type="tel" aria-label="Phone Number" placeholder="Phone Number" />
            <textarea class="field area" aria-label="Message" placeholder="Message"></textarea>
            <div class="act"><button class="btn send" type="button">SEND MESSAGE</button></div>
          </form>
        </div>
      </section>

      <section class="brands">
        ${PARTNERS.map((p) => html`<svg class="logo" viewBox="0 0 170 70">${p}</svg>`)}
        <button class="arrow prev" aria-label="Previous"><svg width="12" height="20"><path d="M10 2 2 10l8 8" fill="none" stroke="#e9e9e9" stroke-width="3"></path></svg></button>
        <button class="arrow next" aria-label="Next"><svg width="12" height="20"><path d="M2 2l8 8-8 8" fill="none" stroke="#e9e9e9" stroke-width="3"></path></svg></button>
      </section>

      <footer class="foot">
        ${this.world()}
        <div class="wrap cols">
          <div>
            <brand-logo light width="157"></brand-logo>
            <p class="about">We provide outstanding business consulting services through team work.</p>
            <div class="social">
              <a class="fb" href="#facebook" aria-label="Facebook">${icon("facebook", 13)}</a>
              <a class="tw" href="#twitter" aria-label="Twitter">${icon("twitter", 13)}</a>
              <a class="ig" href="#instagram" aria-label="Instagram">${icon("instagram", 14)}</a>
              <a class="pt" href="#pinterest" aria-label="Pinterest">${icon("pinterest", 14)}</a>
            </div>
          </div>
          <div>
            <h3>RECENT POSTES</h3>
            <ul class="posts">${POSTS.map((p) => html`<li><a href="#post">${p}</a></li>`)}</ul>
          </div>
          <div>
            <h3>HEADQUARTERS</h3>
            <ul class="hq">
              <li><span class="inline">${icon("marker", 15)}</span>962 Fifth Avenue, 3rd Floor New York, NY10022</li>
              <li class="row">${icon("envelope", 15)}<a href="mailto:hello@dynamiclayers.net">hello@dynamiclayers.net</a></li>
              <li class="row">${icon("phone", 15, true)}<a href="tel:+123456789101">(+123) 456 789 101</a></li>
              <li class="row">${icon("fax", 15)}817-383-3550</li>
              <li class="row">${icon("clock", 15)}Mon - Sat: 9:00 - 18:00</li>
            </ul>
          </div>
          <div>
            <h3>NEWSLETTER SIGNUP</h3>
            <p class="news">Stay always in touch! Subscribe to our newsletter.</p>
            <form class="sub">
              <input type="email" aria-label="Email" placeholder="Email *" />
              <button class="go" type="button" aria-label="Subscribe">${icon("arrow", 12)}</button>
            </form>
            <p>* Don't worry, we don't spam.</p>
          </div>
        </div>
        <div class="copy">© Copyright 2023 DynamicLayers - All Rights Reserved.</div>
      </footer>
    `;
  }
}
